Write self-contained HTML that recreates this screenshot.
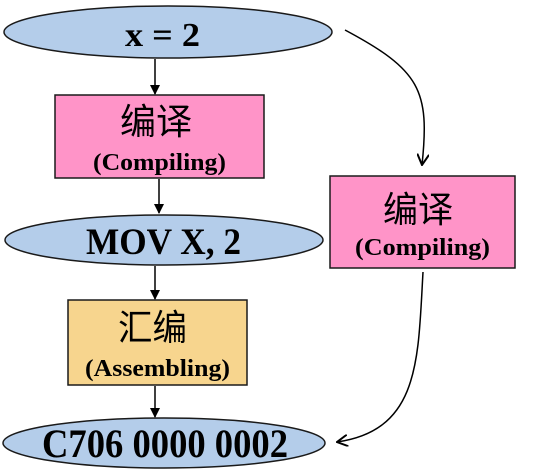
<!DOCTYPE html>
<html><head><style>body{margin:0;background:#fff}svg{display:block}</style></head><body>
<svg width="544" height="475" viewBox="0 0 544 475" xmlns="http://www.w3.org/2000/svg">
<defs><marker id="a" markerWidth="10" markerHeight="10" refX="9" refY="5" orient="auto" markerUnits="userSpaceOnUse"><path d="M0,0 L10,5 L0,10 z" fill="#000"/></marker>
<marker id="b" markerWidth="12" markerHeight="12" refX="11" refY="6" orient="auto" markerUnits="userSpaceOnUse"><path d="M0,0 L11,6 L0,12" fill="none" stroke="#000" stroke-width="2"/></marker></defs>
<g stroke="#1a1a1a" stroke-width="1.5">
<ellipse cx="168" cy="32" rx="164" ry="26" fill="#b4cdea"/>
<rect x="55" y="95" width="209" height="83" fill="#ff94c8"/>
<ellipse cx="164" cy="240" rx="159" ry="25" fill="#b4cdea"/>
<rect x="330" y="176" width="185" height="92" fill="#ff94c8"/>
<rect x="68" y="300" width="179" height="85" fill="#f7d58e"/>
<ellipse cx="164" cy="443" rx="161" ry="25" fill="#b4cdea"/>
</g>
<g stroke="#000" stroke-width="1.5" fill="none">
<line x1="155" y1="59" x2="155" y2="94" marker-end="url(#a)"/>
<line x1="159" y1="179" x2="159" y2="213" marker-end="url(#a)"/>
<line x1="155" y1="266" x2="155" y2="299" marker-end="url(#a)"/>
<line x1="155" y1="386" x2="155" y2="417" marker-end="url(#a)"/>
<path d="M345,30 C420,70 430,90 422,165" marker-end="url(#b)"/>
<path d="M423,272 C418,360 420,430 337,442" marker-end="url(#b)"/>
</g>
<g font-family="'Liberation Serif','Noto Serif CJK SC',serif" font-weight="bold" fill="#000">
<text x="125" y="46" font-size="34" textLength="75" lengthAdjust="spacingAndGlyphs">x = 2</text>
<text x="120" y="134" font-size="36" font-weight="normal" font-family="'Noto Sans CJK SC',sans-serif" textLength="72" lengthAdjust="spacingAndGlyphs">编译</text>
<text x="93" y="170" font-size="24" textLength="133" lengthAdjust="spacingAndGlyphs">(Compiling)</text>
<text x="86" y="254" font-size="37" textLength="155" lengthAdjust="spacingAndGlyphs">MOV X, 2</text>
<text x="383" y="222" font-size="36" font-weight="normal" font-family="'Noto Sans CJK SC',sans-serif" textLength="70" lengthAdjust="spacingAndGlyphs">编译</text>
<text x="355" y="255" font-size="24" textLength="135" lengthAdjust="spacingAndGlyphs">(Compiling)</text>
<text x="118" y="340" font-size="36" font-weight="normal" font-family="'Noto Sans CJK SC',sans-serif" textLength="69" lengthAdjust="spacingAndGlyphs">汇编</text>
<text x="85" y="376" font-size="24" textLength="145" lengthAdjust="spacingAndGlyphs">(Assembling)</text>
<text x="42" y="457" font-size="40" textLength="246" lengthAdjust="spacingAndGlyphs">C706 0000 0002</text>
</g>
</svg>
</body></html>
